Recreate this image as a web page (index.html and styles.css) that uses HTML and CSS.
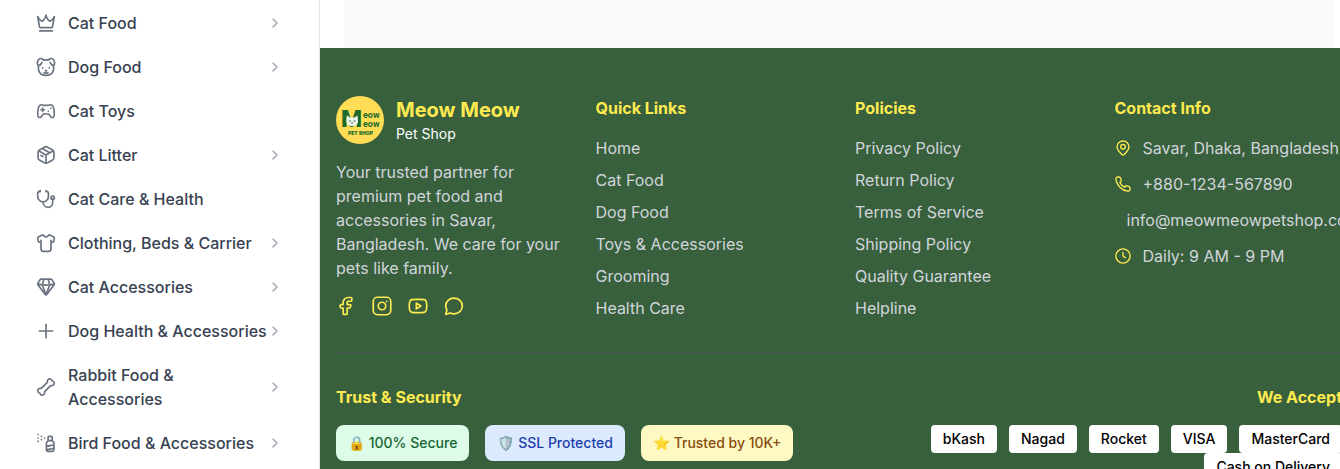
FILE: index.html
```html
<!DOCTYPE html>
<html lang="en">
<head>
<meta charset="utf-8">
<meta name="viewport" content="width=device-width, initial-scale=1">
<title>Meow Meow Pet Shop</title>
<link rel="stylesheet" href="styles.css">
</head>
<body>
<svg class="defs" aria-hidden="true">
  <symbol id="chevron" viewBox="0 0 24 24"><path d="M9 6l6 6-6 6"/></symbol>
</svg>
<div class="layout">
  <aside class="sidebar">
    <nav class="menu" aria-label="Categories">
      <a class="item" href="#"><svg class="icon" viewBox="0 0 24 24"><path d="M5.200 17.500h13.600c.5 0 .9-.3 1-.8L22 4.200c-1.300 3-3 5-5.200 5.800C14.500 8.800 13 6.500 12 2.500 11 6.500 9.500 8.800 7.200 10 5 9.100 3.300 7.200 2 4.200l2.200 12.500c.1.500.5.800 1 .8zM4.500 21.500h15"/></svg><span class="label">Cat Food</span><svg class="chevron"><use href="#chevron"/></svg></a>
      <a class="item" href="#"><svg class="icon" viewBox="0 0 24 24"><path d="M9 3.800c2-.5 4-.5 6 0M3.200 10.500C1.800 17.500 5 22 12 22s10.200-4.500 8.800-11.500M9 3.800C8 1.800 5.500 1.300 4 2.300 1.800 3.800 1.300 7 2.300 10c2 .6 3.800-1.300 4.700-3.500M15 3.800c1-2 3.500-2.500 5-1.500 2.200 1.500 2.700 4.700 1.700 7.700-2 .6-3.800-1.300-4.700-3.500M11.300 16.200h1.400l-.7.700zM9.500 19c1 .5 1.900.3 2.500-.3.600.6 1.500.8 2.500.3M8 13v.1M16 13v.1"/></svg><span class="label">Dog Food</span><svg class="chevron"><use href="#chevron"/></svg></a>
      <a class="item" href="#"><svg class="icon" viewBox="0 0 24 24"><path d="M7 4.500c1.500 0 2 .8 3 .8h4c1 0 1.500-.8 3-.8 3 0 4 2 4.500 5.500.3 2.500.5 5 .4 7-.1 2.800-2.700 3.700-4.200 1.800l-2-2.600c-.3-.4-.6-.6-1.200-.6h-5c-.6 0-.9.200-1.200.6l-2 2.600C4.800 20.700 2.200 19.800 2.100 17c-.1-2 .1-4.500.4-7C3 6.500 4 4.500 7 4.500zM6 10.500h4M8 8.500v4M17.800 8.900v.1M14.700 12.300v.1"/></svg><span class="label">Cat Toys</span></a>
      <a class="item" href="#"><svg class="icon" viewBox="0 0 24 24"><path d="M12 22c-.8 0-1.600-.4-3-1.200l-4-2.200C3 17.500 2.500 17 2.500 15.500v-7C2.500 7 3 6.500 5 5.400l4-2.200C10.400 2.400 11.200 2 12 2s1.600.4 3 1.200l4 2.200c2 1.100 2.500 1.600 2.500 3.100v7c0 1.500-.5 2-2.500 3.100l-4 2.200c-1.400.8-2.200 1.200-3 1.200zM12 22V12M3.200 7L12 12l8.800-5M16.500 9.300L7.300 4.200M6 12.500l2.500 1.200"/></svg><span class="label">Cat Litter</span><svg class="chevron"><use href="#chevron"/></svg></a>
      <a class="item" href="#"><svg class="icon" viewBox="0 0 24 24"><path d="M5 2.500C2.500 2.500 2 3.500 2 6v2.500c0 4 3 7 6.500 7s6.500-3 6.500-7V6c0-2.500-.5-3.500-3-3.500M5 1.800v1.500M12 1.800v1.500M8.500 15.500c0 3.800 2.500 6.500 5.800 6.500s5.700-2.500 5.700-6v-3.500"/><circle cx="20" cy="10.500" r="2"/></svg><span class="label">Cat Care &amp; Health</span></a>
      <a class="item" href="#"><svg class="icon" viewBox="0 0 24 24"><path d="M6 8.700v9.800C6 21 6.500 22 9 22h6c2.500 0 3-1 3-3.500V8.700M6 10.500l-2 .4c-.8.100-1.100-.2-1.300-.9L2 6.200c-.1-.7 0-1.200.7-1.500L7.500 2.500c.6-.3 1.100-.1 1.500.4.700 1 1.700 1.700 3 1.700s2.300-.7 3-1.700c.4-.5.9-.7 1.500-.4l4.800 2.200c.7.300.8.800.7 1.500l-.7 3.800c-.2.7-.5 1-1.300.9l-2-.4"/></svg><span class="label">Clothing, Beds &amp; Carrier</span><svg class="chevron"><use href="#chevron"/></svg></a>
      <a class="item" href="#"><svg class="icon" viewBox="0 0 24 24"><path d="M6.500 2.500h11c.8 0 1.300.3 1.700.9l2.600 4.200c.4.600.3 1.100-.1 1.700l-8.500 11.500c-.8 1-1.600 1-2.400 0L2.300 9.300c-.4-.6-.5-1.100-.1-1.700l2.600-4.200c.4-.6.9-.9 1.700-.9zM2 8.500c3 .8 6 1.200 10 1.200s7-.4 10-1.200M9.500 2.500L7.500 9.300 12 21.500l4.500-12.200-2-6.800"/></svg><span class="label">Cat Accessories</span><svg class="chevron"><use href="#chevron"/></svg></a>
      <a class="item" href="#"><svg class="icon" viewBox="0 0 24 24"><path d="M12 4v16M4 12h16"/></svg><span class="label">Dog Health &amp; Accessories</span><svg class="chevron"><use href="#chevron"/></svg></a>
      <a class="item" href="#"><svg class="icon" viewBox="0 0 24 24"><path d="M17.300 10.700c1-.9 2 0 2.900-.6 2.300-1.300 2.200-4.500-.4-5.300-.3-.1-.5-.3-.6-.6-.8-2.600-4-2.700-5.300-.4-.6.9.3 1.900-.6 2.900l-6.600 6.600c-1 .9-2 0-2.900.6-2.300 1.300-2.200 4.500.4 5.300.3.100.5.300.6.600.8 2.600 4 2.700 5.300.4.600-.9-.3-1.900.6-2.900z"/></svg><span class="label">Rabbit Food &amp; Accessories</span><svg class="chevron"><use href="#chevron"/></svg></a>
      <a class="item" href="#"><svg class="icon" viewBox="0 0 24 24"><path d="M12.500 20.500v-8c0-1.800 1-2.800 2.500-3.300h4c1.500.5 2.500 1.500 2.500 3.300v8c0 .9-.6 1.500-1.500 1.500h-6c-.9 0-1.500-.6-1.500-1.500zM14.500 9V5.500c0-1 .5-1.500 1.500-1.500h2c1 0 1.500.5 1.500 1.500V9M12.500 15.500c3 1 5.500-1.500 9-1M12.500 19.500c3 1 5.500-1.500 9-1M2.500 2v.1M2.500 6v.1M2.500 10v.1M6.500 4v.1M6.500 8v.1M10.500 6v.1"/></svg><span class="label">Bird Food &amp; Accessories</span><svg class="chevron"><use href="#chevron"/></svg></a>
    </nav>
  </aside>
  <div class="page">
    <main class="content"></main>
    <footer class="footer">
      <div class="columns">
        <section>
          <div class="brand">
            <svg class="logo" viewBox="0 0 48 48" role="img" aria-label="Meow Meow Pet Shop logo">
              <circle cx="24" cy="24" r="24" fill="#ffdd55"/>
              <g class="logo-text">
                <text class="logo-m" x="5" y="31">M</text>
                <text class="logo-word" x="27" y="22">eow</text>
                <text class="logo-word" x="27" y="31">eow</text>
                <text class="logo-shop" x="12" y="39">PET SHOP</text>
              </g>
              <path d="M11 19.500l3 2h4.500l3-2 .5 6c0 3-2.500 4.500-5.800 4.500s-5.700-1.500-5.700-4.500z" fill="#eef5ee"/>
              <path d="M13.500 25h1M18 25h1M15.700 27h1" stroke="#38603d" stroke-width="1"/>
            </svg>
            <div>
              <h2 class="brand-name">Meow Meow</h2>
              <p class="brand-sub">Pet Shop</p>
            </div>
          </div>
          <p class="about">Your trusted partner for premium pet food and accessories in Savar, Bangladesh. We care for your pets like family.</p>
          <div class="social">
            <a href="#" aria-label="Facebook"><svg class="icon" viewBox="0 0 24 24"><path d="M6.200 10.300c-1 0-1.200.2-1.200 1.200v1.700c0 1 .2 1.200 1.200 1.200h2.400v6.500c0 1 .2 1.200 1.200 1.200h2.400c1 0 1.200-.2 1.200-1.200v-6.500h2.700c.7 0 .9-.1 1.100-.8l.5-1.700c.3-1.200.2-1.600-1.100-1.600h-3.200V7.500c0-.7.500-1.200 1.200-1.200h3.200c1 0 1.200-.2 1.200-1.200V3c0-1-.2-1.200-1.200-1.200h-3.200c-3.300 0-6 2.600-6 5.700v2.800z"/></svg></a>
            <a href="#" aria-label="Instagram"><svg class="icon" viewBox="0 0 24 24"><rect x="1.500" y="1.500" width="21" height="21" rx="5"/><circle cx="12" cy="12" r="4.500"/><path d="M17.700 6.500v-.1"/></svg></a>
            <a href="#" aria-label="YouTube"><svg class="icon" viewBox="0 0 24 24"><path d="M12 4c2.700 0 5.200.1 7.500.4 2.200.3 3 2.200 3 7.600s-.8 7.300-3 7.600c-2.300.3-4.800.4-7.500.4s-5.200-.1-7.500-.4c-2.200-.3-3-2.200-3-7.600s.8-7.300 3-7.600C6.800 4.100 9.300 4 12 4zM10 8.500v7l5.500-3.500z"/></svg></a>
            <a href="#" aria-label="Chat"><svg class="icon" viewBox="0 0 24 24"><path d="M2 22l1.500-5.200C2.600 15.300 2 13.700 2 12 2 6.500 6.500 2.500 12 2.500S22 6.500 22 12s-4.500 9.500-10 9.500c-1.800 0-3.300-.4-4.700-1.100z"/></svg></a>
          </div>
        </section>
        <section>
          <h3 class="heading">Quick Links</h3>
          <ul class="links">
            <li><a href="#">Home</a></li>
            <li><a href="#">Cat Food</a></li>
            <li><a href="#">Dog Food</a></li>
            <li><a href="#">Toys &amp; Accessories</a></li>
            <li><a href="#">Grooming</a></li>
            <li><a href="#">Health Care</a></li>
          </ul>
        </section>
        <section>
          <h3 class="heading">Policies</h3>
          <ul class="links">
            <li><a href="#">Privacy Policy</a></li>
            <li><a href="#">Return Policy</a></li>
            <li><a href="#">Terms of Service</a></li>
            <li><a href="#">Shipping Policy</a></li>
            <li><a href="#">Quality Guarantee</a></li>
            <li><a href="#">Helpline</a></li>
          </ul>
        </section>
        <section>
          <h3 class="heading">Contact Info</h3>
          <ul class="contact">
            <li><svg class="icon-small" viewBox="0 0 24 24"><path d="M12 22.500c-.7 0-1.300-.3-1.800-.8C6.500 18.200 3 14.800 3 10.300 3 5.300 7 1.500 12 1.500s9 3.800 9 8.800c0 4.500-3.500 7.900-7.200 11.400-.5.500-1.100.8-1.800.8z"/><circle cx="12" cy="10" r="3.500"/></svg><span>Savar, Dhaka, Bangladesh</span></li>
            <li><svg class="icon-small" viewBox="0 0 24 24"><path d="M9.200 5.500l-.8-2C8 2.300 7.300 1.500 6 1.500H4.500C2.500 1.500 1 3 1.300 5c1.300 9 8.700 16.400 17.700 17.700 2 .3 3.500-1.200 3.500-3.200V18c0-1.300-.8-2-2-2.400l-2.500-.8c-1-.3-1.800-.1-2.500.6l-1.300 1.400c-3-1.600-5.400-4-7-7l1.400-1.300c.8-.8 1-1.800.6-3z"/></svg><span>+880-1234-567890</span></li>
            <li><i></i><span>info@meowmeowpetshop.com</span></li>
            <li><svg class="icon-small" viewBox="0 0 24 24"><circle cx="12" cy="12" r="10.700"/><path d="M12 6.500V12l3.500 2.500"/></svg><span>Daily: 9 AM - 9 PM</span></li>
          </ul>
        </section>
      </div>
      <div class="assurance">
        <section>
          <h3 class="heading">Trust &amp; Security</h3>
          <div class="badges">
            <span class="badge badge-green">🔒 100% Secure</span>
            <span class="badge badge-blue">🛡️ SSL Protected</span>
            <span class="badge badge-yellow">⭐ Trusted by 10K+</span>
          </div>
        </section>
        <section class="accept">
          <h3 class="heading">We Accept</h3>
          <div class="payments">
            <span class="pay">bKash</span>
            <span class="pay">Nagad</span>
            <span class="pay">Rocket</span>
            <span class="pay">VISA</span>
            <span class="pay">MasterCard</span>
            <span class="pay">Cash on Delivery</span>
          </div>
        </section>
      </div>
    </footer>
  </div>
</div>
</body>
</html>
```
FILE: styles.css
```css
* { box-sizing: border-box; }
body {
  margin: 0;
  height: 100vh;
  overflow: hidden;
  background: #fff;
  color: #000;
  font: 16px/24px Inter, "Liberation Sans", sans-serif;
}
h2, h3, p, ul { margin: 0; padding: 0; }
ul { list-style: none; }
a { color: inherit; text-decoration: none; }
svg {
  flex: none;
  fill: none;
  stroke: currentColor;
  stroke-width: 2;
  stroke-linecap: round;
  stroke-linejoin: round;
}
.defs { display: none; }
.layout { display: flex; min-height: 100vh; }

.sidebar {
  flex: none;
  width: 320px;
  padding: 1px 24px 0;
  border-right: 1px solid #e5e7eb;
}
.menu { display: flex; flex-direction: column; }
.item {
  display: flex;
  align-items: center;
  padding: 10px 12px;
  color: #374151;
  font-weight: 500;
}
.icon { display: block; width: 20px; height: 20px; }
.item .icon { margin-right: 12px; color: #6b7280; }
.label { flex: 1; }
.chevron { width: 16px; height: 16px; color: #9ca3af; }

/* The page column runs slightly past the right edge of the window. */
.page { flex: 1; min-width: 0; margin-right: -18px; }
.content { height: 48px; margin: 0 24px; background: #f9fafb; }
.footer { padding: 48px 16px; background: #38603d; color: #d1d5db; }
.columns {
  display: grid;
  grid-template-columns: repeat(4, minmax(0, 1fr));
  gap: 32px;
}
.brand { display: flex; align-items: center; gap: 12px; margin-bottom: 16px; }
.logo { width: 48px; height: 48px; stroke: none; }
.logo-text { fill: #1d6b2c; font-weight: 900; }
.logo-m { font: 900 24px Roboto, sans-serif; }
.logo-word { font: 700 9px Roboto, sans-serif; }
.logo-shop { font-size: 5px; }
.brand-name { color: #ffeb50; font-size: 20px; line-height: 28px; font-weight: 700; }
.brand-sub { color: #fff; font-size: 14px; line-height: 20px; }
.social { display: flex; gap: 16px; margin-top: 16px; color: #ffeb50; }
.heading { margin-bottom: 16px; color: #ffeb50; font-size: 16px; line-height: 24px; font-weight: 700; }
.links { display: grid; gap: 8px; }
.contact { display: grid; gap: 12px; }
.contact li { display: flex; align-items: center; gap: 12px; white-space: nowrap; }
.icon-small { width: 16px; height: 16px; color: #ffeb50; }

.assurance {
  display: grid;
  grid-template-columns: repeat(2, minmax(0, 1fr));
  gap: 32px;
  margin-top: 32px;
  padding-top: 32px;
  border-top: 1px solid #4b5563;
}
.badges { display: flex; gap: 16px; font-size: 14px; line-height: 20px; font-weight: 500; }
.badge { padding: 8px 12px; border-radius: 8px; white-space: nowrap; }
.badge-green { background: #dcfce7; color: #166534; }
.badge-blue { background: #dbeafe; color: #1e40af; }
.badge-yellow { background: #fef9c3; color: #854d0e; }
.accept { text-align: right; }
.payments {
  display: flex;
  flex-wrap: wrap;
  justify-content: flex-end;
  column-gap: 12px;
  font-size: 14px;
  line-height: 20px;
  font-weight: 500;
}
.pay { padding: 4px 12px; border-radius: 4px; background: #fff; color: #000; }
```
